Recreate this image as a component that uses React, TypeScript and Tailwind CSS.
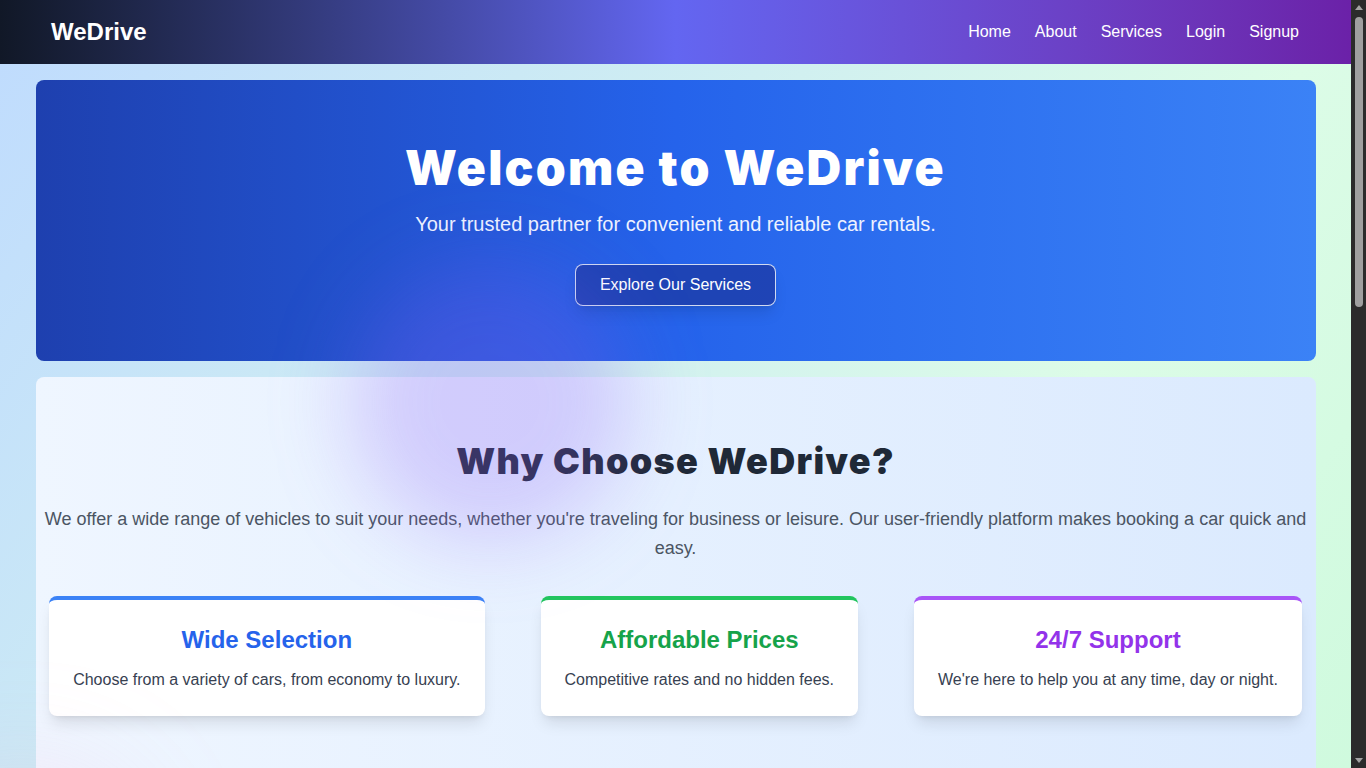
const navLinks = ["Home", "About", "Services", "Login", "Signup"];

const features = [
  {
    title: "Wide Selection",
    text: "Choose from a variety of cars, from economy to luxury.",
    border: "border-[#3b82f6]",
    color: "text-[#2563eb]",
  },
  {
    title: "Affordable Prices",
    text: "Competitive rates and no hidden fees.",
    border: "border-[#22c55e]",
    color: "text-[#16a34a]",
  },
  {
    title: "24/7 Support",
    text: "We're here to help you at any time, day or night.",
    border: "border-[#a855f7]",
    color: "text-[#9333ea]",
  },
];

const Navbar: React.FC = () => {
  return (
    <nav className="h-16 flex items-center justify-between px-[51px] bg-gradient-to-r from-[#111827] via-[#6366f1] to-[#6b21a8]">
      <span className="text-2xl font-bold text-white">WeDrive</span>

      <ul className="flex items-center gap-6 pr-px">
        {navLinks.map((link) => (
          <li key={link}>
            <a href="#" className="text-base text-white">
              {link}
            </a>
          </li>
        ))}
      </ul>
    </nav>
  );
};

const Hero: React.FC = () => {
  return (
    <section className="rounded-lg bg-gradient-to-r from-[#1e40af] via-[#2563eb] to-[#3b82f6] pt-16 pb-[55px] flex flex-col items-center text-center">
      <h1 className="font-['Inter',sans-serif] text-5xl leading-[48px] font-black tracking-[0.046em] text-white">
        Welcome to WeDrive
      </h1>
      <p className="mt-[18px] text-xl leading-7 text-[#eef2ff]">
        Your trusted partner for convenient and reliable car rentals.
      </p>
      <button className="mt-[26px] h-[42px] px-6 rounded-lg border border-white/80 bg-[#1e40af]/90 text-base text-white shadow-lg">
        Explore Our Services
      </button>
    </section>
  );
};

const WhyChoose: React.FC = () => {
  return (
    <section className="flex-1 mt-4 rounded-t-lg bg-gradient-to-r from-[#eff6ff] to-[#dbeafe] px-2 pt-16 pb-24">
      <h2 className="text-center font-['Inter',sans-serif] text-4xl leading-10 font-black tracking-[0.036em] text-[#1f2937]">
        Why Choose WeDrive?
      </h2>
      <p className="mt-6 text-center text-lg leading-relaxed text-[#4b5563]">
        We offer a wide range of vehicles to suit your needs, whether you're traveling for business or leisure. Our
        user-friendly platform makes booking a car quick and easy.
      </p>

      <div className="mt-8 flex justify-center gap-14">
        {features.map((f) => (
          <div key={f.title} className={`rounded-lg border-t-4 ${f.border} bg-white p-6 text-center shadow-lg`}>
            <h3 className={`text-2xl font-bold ${f.color}`}>{f.title}</h3>
            <p className="mt-3 text-base text-[#374151]">{f.text}</p>
          </div>
        ))}
      </div>
    </section>
  );
};

const Scrollbar: React.FC = () => {
  return (
    <div className="w-[15px] shrink-0 flex flex-col items-center bg-[#2b2b2b]">
      <div className="h-[15px] flex items-center justify-center">
        <div className="w-0 h-0 border-x-[4px] border-x-transparent border-b-[5px] border-b-[#a3a3a3]" />
      </div>
      <div className="mt-[2px] w-[8px] h-[290px] rounded-full bg-[#9f9f9f]" />
      <div className="flex-1" />
      <div className="h-[15px] flex items-center justify-center">
        <div className="w-0 h-0 border-x-[4px] border-x-transparent border-t-[5px] border-t-[#a3a3a3]" />
      </div>
    </div>
  );
};

export default function App() {
  return (
    <div className="h-screen flex font-['Liberation_Sans',Arial,sans-serif]">
      <div className="flex-1 overflow-y-auto [scrollbar-width:none]">
        <div className="relative overflow-hidden min-h-[1940px] flex flex-col bg-gradient-to-br from-[#bfdbfe] via-[#dcfce7] to-[#bbf7d0]">
          <Navbar />

          <main className="flex-1 flex flex-col w-full max-w-7xl mx-auto pt-4">
            <Hero />
            <WhyChoose />
          </main>

          {/* decorative blobs */}
          <div className="pointer-events-none absolute left-[350px] top-[262px] h-[280px] w-[280px] rounded-full bg-[#8b5cf6]/25 blur-2xl" />
          <div className="pointer-events-none absolute -left-[80px] top-[790px] h-[200px] w-[200px] rounded-full bg-[#f9a8d4]/30 blur-3xl" />
        </div>
      </div>
      <Scrollbar />
    </div>
  );
}
